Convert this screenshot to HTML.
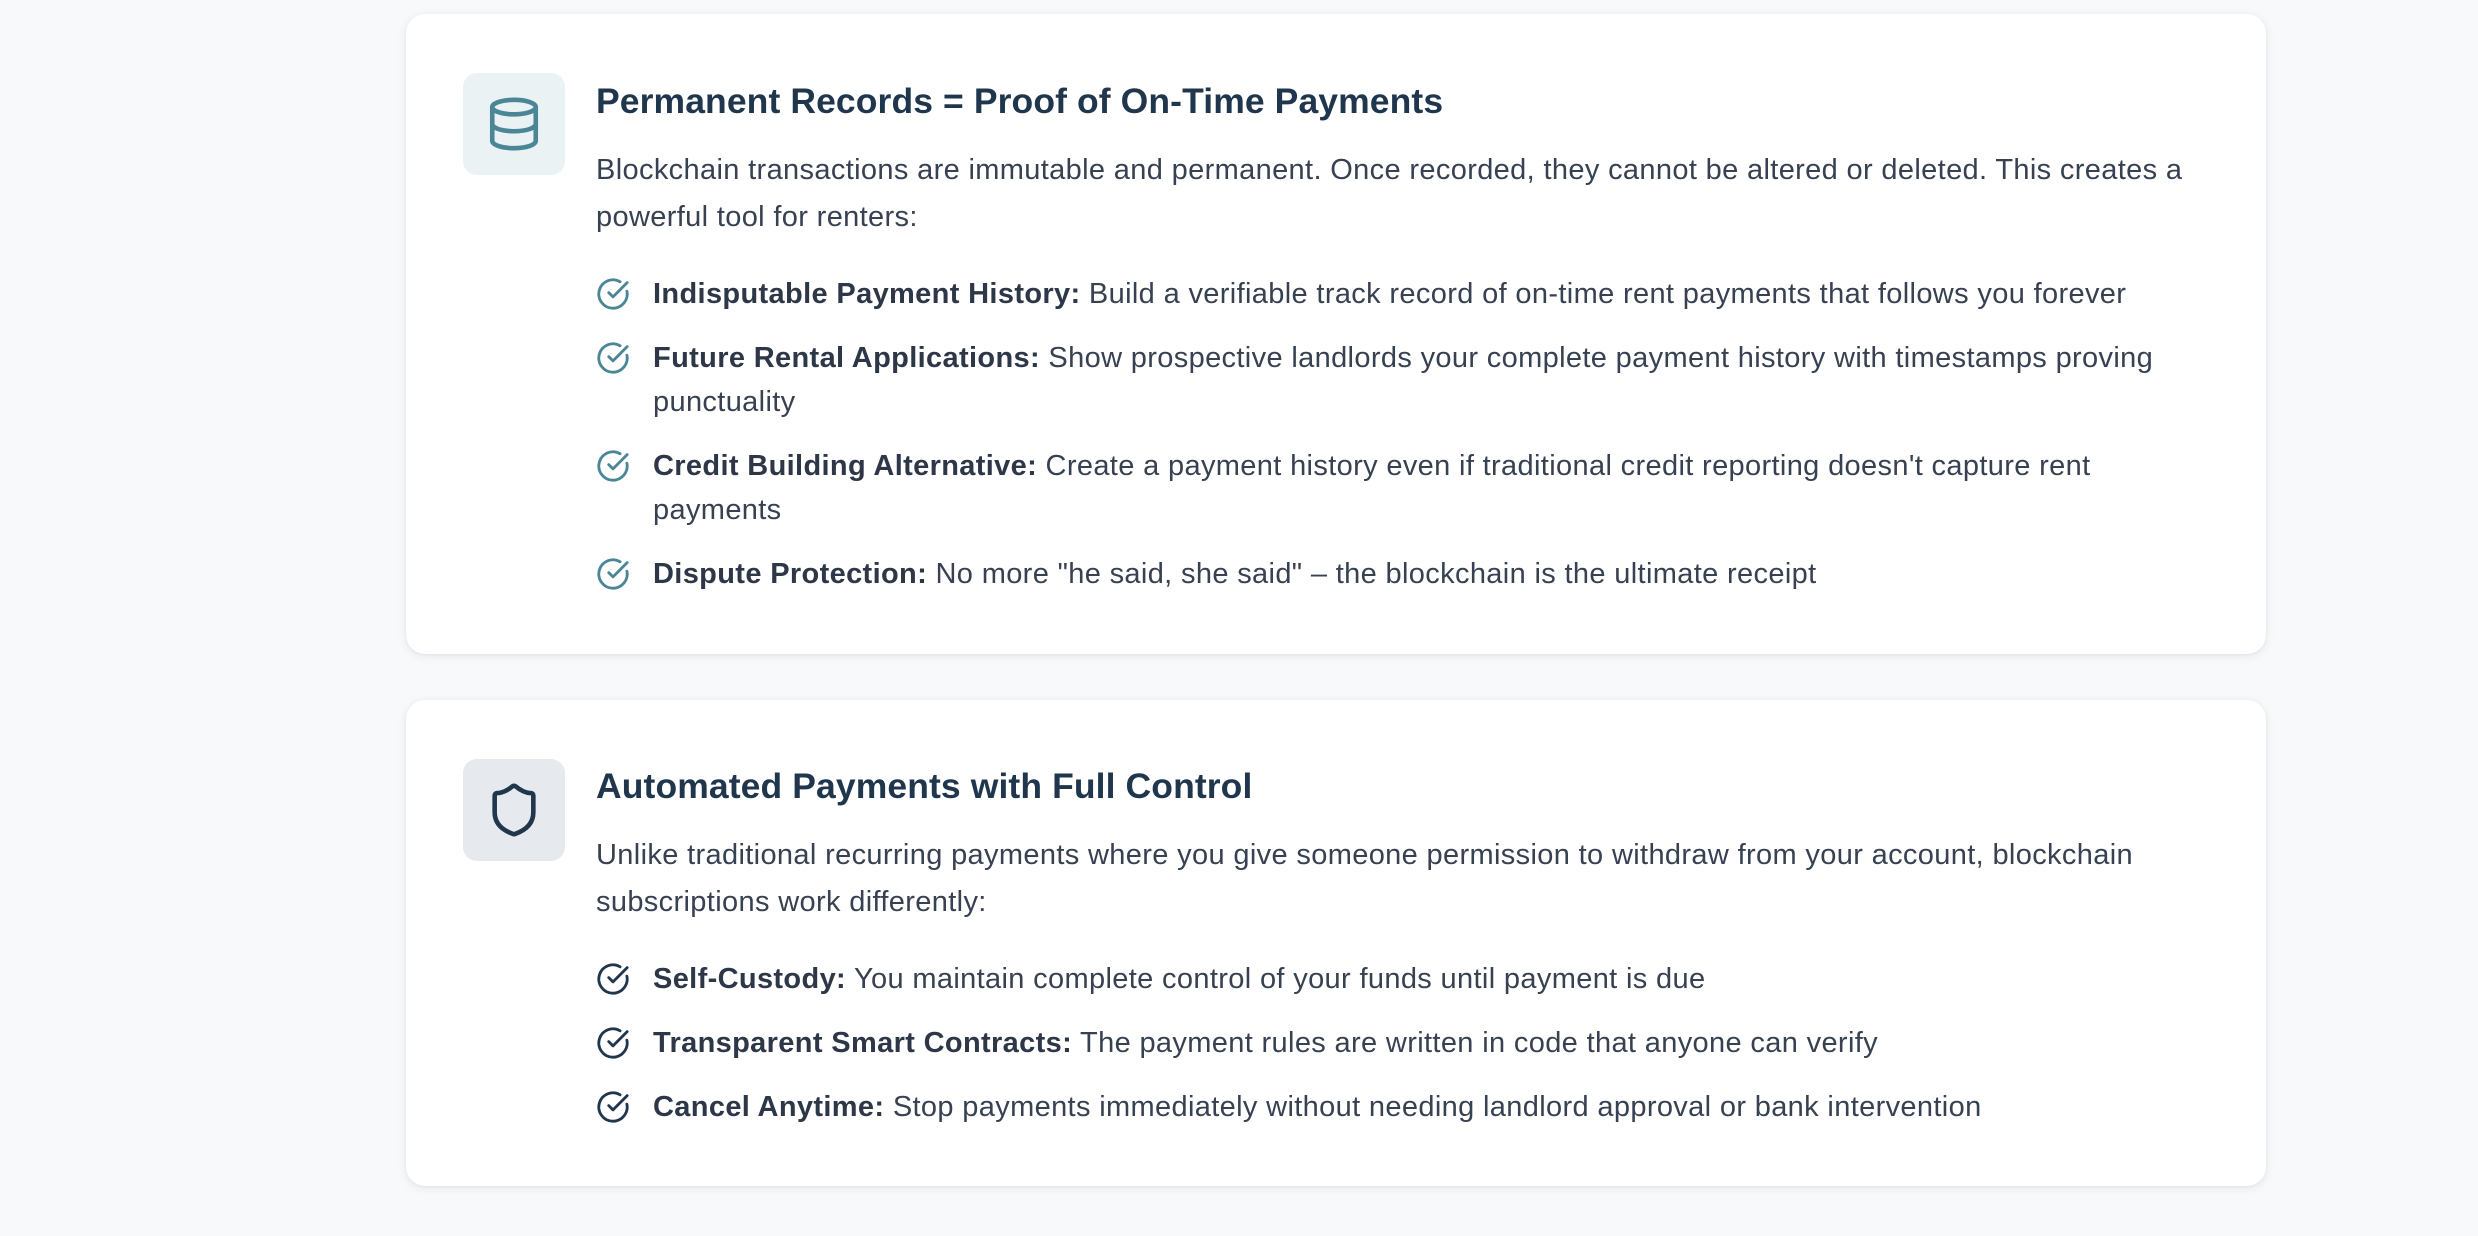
<!DOCTYPE html>
<html><head><meta charset="utf-8"><style>
*{margin:0;padding:0;box-sizing:border-box}
html,body{width:2478px;height:1236px;background:#f8f9fb;overflow:hidden;font-family:"Liberation Sans",sans-serif;color:#374151}
.card{position:absolute;left:406px;width:1860px;background:#fff;border-radius:19px;box-shadow:0 2px 10px rgba(30,40,60,.08),0 1px 3px rgba(30,40,60,.05)}
.ib{position:absolute;left:57px;top:59px;width:102px;height:102px;border-radius:14px;display:flex;align-items:center;justify-content:center}
.ct{position:absolute;left:190px;right:20px}
h2{font-size:35.5px;line-height:44px;font-weight:700;color:#1f364d;white-space:nowrap;letter-spacing:0.1px}
p{font-size:29px;line-height:47px;margin-top:24px;white-space:nowrap;letter-spacing:0.35px}
ul{list-style:none;margin-top:31px}
li{position:relative;padding-left:57px;font-size:29px;line-height:44px;white-space:nowrap;margin-bottom:20px;letter-spacing:0.35px}
li b{color:#2d3748}
li svg{position:absolute;left:0;top:5px}
</style></head><body>
<div class="card" style="top:14px;height:640px">
 <div class="ib" style="background:#eaf2f4">
  <svg width="58" height="58" viewBox="0 0 24 24" fill="none" stroke="#4b8697" stroke-width="1.9" stroke-linecap="round" stroke-linejoin="round"><ellipse cx="12" cy="5" rx="9" ry="3"/><path d="M3 5V19A9 3 0 0 0 21 19V5"/><path d="M3 12A9 3 0 0 0 21 12"/></svg>
 </div>
 <div class="ct" style="top:65px">
  <h2>Permanent Records = Proof of On-Time Payments</h2>
  <p>Blockchain transactions are immutable and permanent. Once recorded, they cannot be altered or deleted. This creates a<br>powerful tool for renters:</p>
  <ul>
   <li><svg width="34" height="34" viewBox="0 0 24 24" fill="none" stroke="#4b8697" stroke-width="2" stroke-linecap="round" stroke-linejoin="round"><path d="M21.801 10A10 10 0 1 1 17 3.335"/><path d="m9 11 3 3L22 4"/></svg><b>Indisputable Payment History:</b> Build a verifiable track record of on-time rent payments that follows you forever</li>
   <li><svg width="34" height="34" viewBox="0 0 24 24" fill="none" stroke="#4b8697" stroke-width="2" stroke-linecap="round" stroke-linejoin="round"><path d="M21.801 10A10 10 0 1 1 17 3.335"/><path d="m9 11 3 3L22 4"/></svg><b>Future Rental Applications:</b> Show prospective landlords your complete payment history with timestamps proving<br>punctuality</li>
   <li><svg width="34" height="34" viewBox="0 0 24 24" fill="none" stroke="#4b8697" stroke-width="2" stroke-linecap="round" stroke-linejoin="round"><path d="M21.801 10A10 10 0 1 1 17 3.335"/><path d="m9 11 3 3L22 4"/></svg><b>Credit Building Alternative:</b> Create a payment history even if traditional credit reporting doesn't capture rent<br>payments</li>
   <li><svg width="34" height="34" viewBox="0 0 24 24" fill="none" stroke="#4b8697" stroke-width="2" stroke-linecap="round" stroke-linejoin="round"><path d="M21.801 10A10 10 0 1 1 17 3.335"/><path d="m9 11 3 3L22 4"/></svg><b>Dispute Protection:</b> No more "he said, she said" – the blockchain is the ultimate receipt</li>
  </ul>
 </div>
</div>
<div class="card" style="top:700px;height:486px">
 <div class="ib" style="background:#e6eaee">
  <svg width="58" height="58" viewBox="0 0 24 24" fill="none" stroke="#1f364d" stroke-width="1.9" stroke-linecap="round" stroke-linejoin="round"><path d="M20 13c0 5-3.5 7.5-7.66 8.95a1 1 0 0 1-.67-.01C7.5 20.5 4 18 4 13V6a1 1 0 0 1 1-1c2 0 4.5-1.2 6.24-2.72a1.17 1.17 0 0 1 1.52 0C14.51 3.81 17 5 19 5a1 1 0 0 1 1 1z"/></svg>
 </div>
 <div class="ct" style="top:64px">
  <h2>Automated Payments with Full Control</h2>
  <p>Unlike traditional recurring payments where you give someone permission to withdraw from your account, blockchain<br>subscriptions work differently:</p>
  <ul>
   <li><svg width="34" height="34" viewBox="0 0 24 24" fill="none" stroke="#1f364d" stroke-width="2" stroke-linecap="round" stroke-linejoin="round"><path d="M21.801 10A10 10 0 1 1 17 3.335"/><path d="m9 11 3 3L22 4"/></svg><b>Self-Custody:</b> You maintain complete control of your funds until payment is due</li>
   <li><svg width="34" height="34" viewBox="0 0 24 24" fill="none" stroke="#1f364d" stroke-width="2" stroke-linecap="round" stroke-linejoin="round"><path d="M21.801 10A10 10 0 1 1 17 3.335"/><path d="m9 11 3 3L22 4"/></svg><b>Transparent Smart Contracts:</b> The payment rules are written in code that anyone can verify</li>
   <li><svg width="34" height="34" viewBox="0 0 24 24" fill="none" stroke="#1f364d" stroke-width="2" stroke-linecap="round" stroke-linejoin="round"><path d="M21.801 10A10 10 0 1 1 17 3.335"/><path d="m9 11 3 3L22 4"/></svg><b>Cancel Anytime:</b> Stop payments immediately without needing landlord approval or bank intervention</li>
  </ul>
 </div>
</div>
</body></html>
